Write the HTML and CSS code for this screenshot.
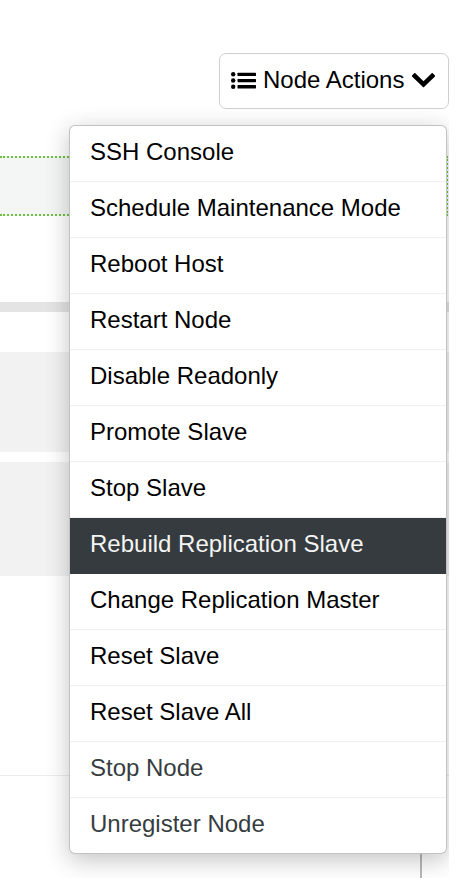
FILE: index.html
```html
<!DOCTYPE html>
<html lang="en">
<head>
  <meta charset="UTF-8" />
  <title>Node Actions</title>
  <meta name="viewport" content="width=device-width, initial-scale=1.0" />
  <link rel="stylesheet" href="styles.css">
</head>
<body>
  <div class="page">
    <div class="toolbar">
      <button class="action-button" id="node-actions-btn">
        <svg class="icon-list" width="25" height="17" viewBox="0 0 25 17">
          <circle cx="2.2" cy="2.3" r="2.2" />
          <circle cx="2.2" cy="8.5" r="2.2" />
          <circle cx="2.2" cy="14.7" r="2.2" />
          <rect x="6.5" y="0.7" width="18.5" height="3.3" rx="0.6" />
          <rect x="6.5" y="6.9" width="18.5" height="3.3" rx="0.6" />
          <rect x="6.5" y="13.1" width="18.5" height="3.3" rx="0.6" />
        </svg>
        <span>Node Actions</span>
        <svg class="icon-chevron" width="23" height="15" viewBox="0 0 23 15">
          <polyline points="2.8,3 11.5,11.4 20.2,3" />
        </svg>
      </button>
    </div>

    <div class="status-panel"></div>
    <div class="tab-bar"></div>
    <div class="stat-block first"></div>
    <div class="stat-block second"></div>
    <div class="divider"></div>
    <div class="log-panel"></div>

    <ul class="dropdown-menu">
      <li>SSH Console</li>
      <li>Schedule Maintenance Mode</li>
      <li>Reboot Host</li>
      <li>Restart Node</li>
      <li>Disable Readonly</li>
      <li>Promote Slave</li>
      <li>Stop Slave</li>
      <li class="active">Rebuild Replication Slave</li>
      <li>Change Replication Master</li>
      <li>Reset Slave</li>
      <li>Reset Slave All</li>
      <li class="muted">Stop Node</li>
      <li class="muted">Unregister Node</li>
    </ul>
  </div>
</body>
</html>
```

FILE: styles.css
```css
body {
  margin: 0;
  font-family: "Liberation Sans", Arial, Helvetica, sans-serif;
  background: #fff;
  color: #000;
}

.page {
  position: relative;
  width: 449px;
  height: 878px;
  overflow: hidden;
}

.toolbar {
  display: flex;
  justify-content: flex-end;
  padding-top: 53px;
}

.action-button {
  display: flex;
  align-items: center;
  box-sizing: border-box;
  width: 230px;
  height: 56px;
  padding: 0 12px 2px 11px;
  border: 1px solid #cfcfcf;
  border-radius: 7px;
  background: #fff;
  font-family: inherit;
  font-size: 24px;
  color: #000;
  cursor: pointer;
}

.action-button span {
  margin: 0 8px 0 7px;
}

.icon-list {
  fill: #000;
}

.icon-chevron {
  fill: none;
  stroke: #000;
  stroke-width: 4.6;
  stroke-linecap: square;
}

.status-panel {
  margin-top: 47px;
  height: 56px;
  width: 446px;
  background: #f4f6f5;
  border: 2px dotted #6fc23f;
  border-left: none;
}

.tab-bar {
  margin-top: 86px;
  height: 10px;
  background: #e4e4e4;
}

.stat-block {
  background: #f2f2f2;
}

.stat-block.first {
  margin-top: 40px;
  height: 100px;
}

.stat-block.second {
  margin-top: 10px;
  height: 114px;
}

.divider {
  margin-top: 199px;
  height: 1px;
  background: #ececec;
}

.log-panel {
  width: 420px;
  height: 110px;
  border-right: 2px solid #b9b9b9;
}

.dropdown-menu {
  position: absolute;
  top: 125px;
  left: 69px;
  width: 378px;
  box-sizing: border-box;
  margin: 0;
  padding: 0;
  list-style: none;
  background: #fff;
  border: 1px solid rgba(0, 0, 0, 0.24);
  border-radius: 6px;
  box-shadow: 0 6px 24px rgba(0, 0, 0, 0.24);
  overflow: hidden;
}

.dropdown-menu li {
  height: 55px;
  line-height: 51px;
  padding: 0 20px;
  font-size: 24px;
  border-bottom: 1px solid #f1f1f1;
  white-space: nowrap;
}

.dropdown-menu li:last-child {
  border-bottom: none;
}

.dropdown-menu li.active {
  background: #353b3e;
  color: #f4f4f4;
  border-bottom-color: #353b3e;
}

.dropdown-menu li.muted {
  color: #363d41;
}
```
